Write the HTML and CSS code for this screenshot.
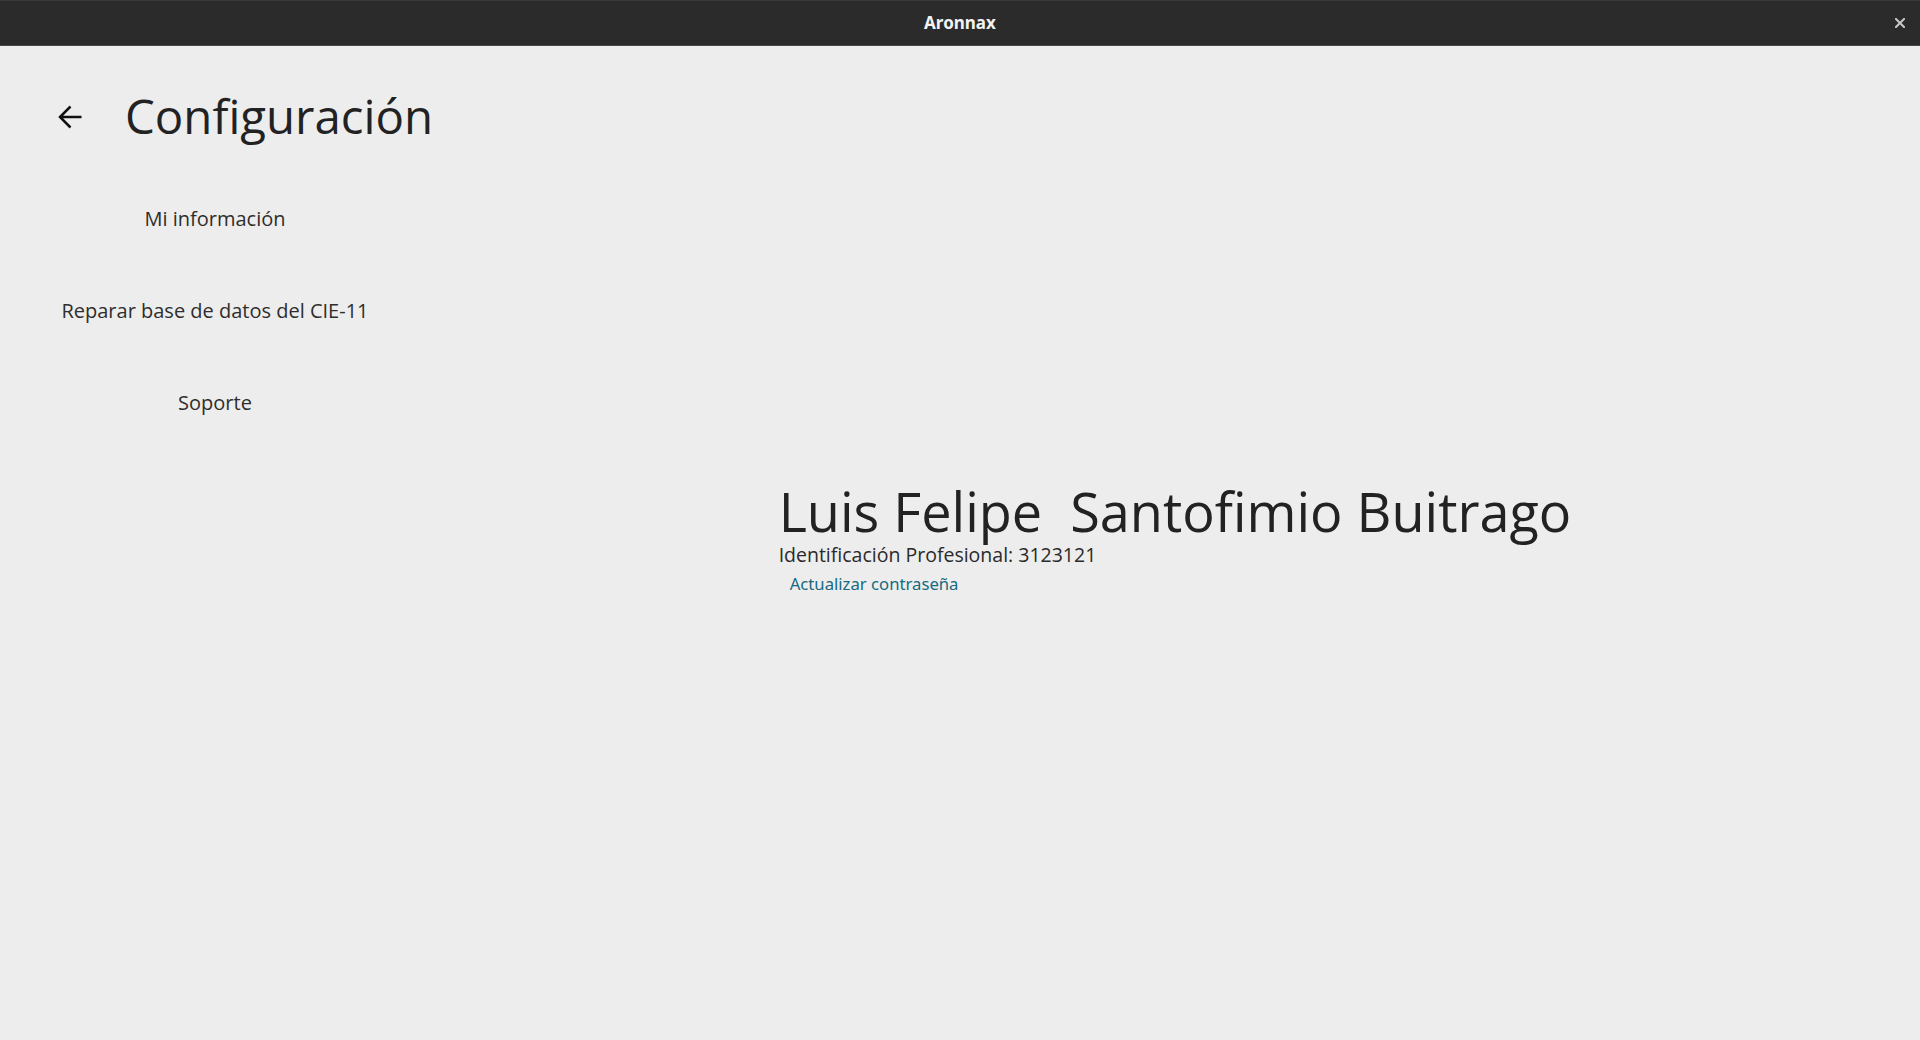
FILE: index.html
```html
<!DOCTYPE html>
<html lang="es">
<head>
<meta charset="utf-8">
<title>Aronnax</title>
<link rel="stylesheet" href="styles.css">
</head>
<body>
<div class="titlebar">
  <span class="titlebar-title">Aronnax</span>
  <button class="titlebar-close" aria-label="Cerrar">
    <svg width="10" height="10" viewBox="0 0 10 10"><path d="M1 1L9 9M9 1L1 9" stroke="#c8c8c8" stroke-width="2" stroke-linecap="square"/></svg>
  </button>
</div>
<div class="app">
  <header class="header">
    <button class="back" aria-label="Atrás">
      <svg width="24" height="24" viewBox="0 0 24 24"><path d="M23.5 12H2.5M12.5 1.5L2 12l10.5 10.5" fill="none" stroke="#111" stroke-width="2.5"/></svg>
    </button>
    <h1 class="page-title">Configuración</h1>
  </header>
  <div class="content">
    <nav class="sidebar">
      <a class="nav-item">Mi información</a>
      <a class="nav-item">Reparar base de datos del CIE-11</a>
      <a class="nav-item">Soporte</a>
    </nav>
    <main class="main">
      <div class="profile">
        <div class="profile-name">Luis Felipe &nbsp;Santofimio Buitrago</div>
        <div class="profile-id">Identificación Profesional: 3123121</div>
        <a class="profile-link">Actualizar contraseña</a>
      </div>
    </main>
  </div>
</div>
</body>
</html>
```

FILE: styles.css
```css
* { box-sizing: border-box; }
html, body { margin: 0; padding: 0; }
body {
  width: 1920px;
  height: 1040px;
  overflow: hidden;
  background: #ededed;
  font-family: "Open Sans", "Noto Sans", sans-serif;
  color: #222;
}
.titlebar {
  height: 46px;
  background: #2b2b2b;
  border-top: 1px solid #383838;
  border-bottom: 1px solid #474747;
  display: flex;
  align-items: center;
  justify-content: center;
  position: relative;
}
.titlebar-title {
  font-family: "Noto Sans", sans-serif;
  font-weight: 700;
  font-size: 17px;
  line-height: 44px;
  color: #f2f2f2;
}
.titlebar-close {
  position: absolute;
  right: 15px;
  top: 17px;
  width: 10px;
  height: 10px;
  padding: 0;
  border: 0;
  background: none;
  display: flex;
}
.header {
  height: 126px;
  display: flex;
  align-items: flex-start;
  padding: 42px 0 0 58px;
}
.back {
  width: 24px;
  height: 24px;
  padding: 0;
  margin-top: 17px;
  border: 0;
  background: none;
  display: flex;
}
.page-title {
  margin: 0 0 0 43px;
  font-weight: 400;
  font-size: 47.4px;
  line-height: 56px;
  color: #222;
}
.content {
  display: grid;
  grid-template-columns: 430px 1fr;
}
.sidebar {
  display: flex;
  flex-direction: column;
  padding-top: 1px;
}
.nav-item {
  height: 92px;
  line-height: 92px;
  text-align: center;
  font-size: 20px;
  color: #2e2e2e;
}
.main {
  display: flex;
  justify-content: center;
  padding-top: 309px;
}
.profile {
  display: flex;
  flex-direction: column;
  align-items: flex-start;
}
.profile-name {
  font-size: 54px;
  line-height: 60px;
  color: #222;
  white-space: nowrap;
}
.profile-id {
  margin-top: 2px;
  font-size: 19.5px;
  line-height: 24px;
  color: #2a2a2a;
}
.profile-link {
  margin: 7px 0 0 11px;
  font-family: "Noto Sans", sans-serif;
  font-size: 16.7px;
  line-height: 20px;
  color: #176a7f;
  cursor: pointer;
}
```
